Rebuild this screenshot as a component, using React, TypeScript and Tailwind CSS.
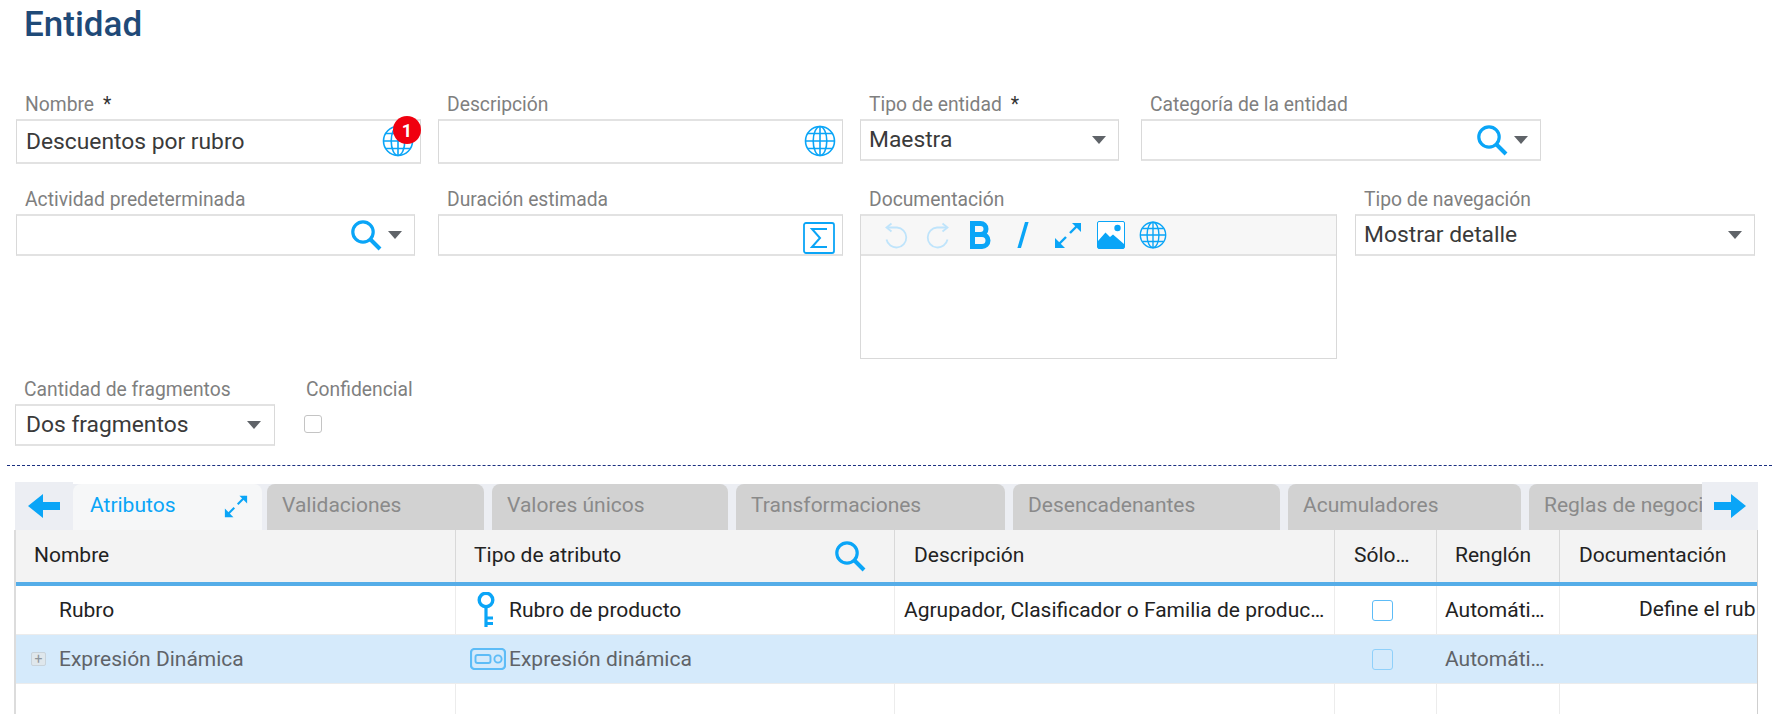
import React from "react";

const BLUE = "#0aa5f7";

function Globe({ size = 32, className = "" }: { size?: number; className?: string }) {
  return (
    <svg width={size} height={size} viewBox="0 0 32 32" fill="none" stroke={BLUE} strokeWidth="1.6" className={className}>
      <circle cx="16" cy="16" r="14.5" />
      <ellipse cx="16" cy="16" rx="6.8" ry="14.5" />
      <path d="M16 1.5v29M1.5 16h29M3.8 8.5h24.4M3.8 23.5h24.4" />
    </svg>
  );
}
function Search({ size = 32 }: { size?: number }) {
  return (
    <svg width={size} height={size} viewBox="0 0 32 32" fill="none" stroke={BLUE}>
      <circle cx="13" cy="13" r="10.2" strokeWidth="3.2" />
      <path d="M20.5 20.5L30 30" strokeWidth="4" />
    </svg>
  );
}
function Caret() {
  return (
    <svg width="14" height="8" viewBox="0 0 14 8" className="shrink-0">
      <path d="M0 0h14L7 8z" fill="#5f6368" />
    </svg>
  );
}
function Sigma() {
  return (
    <svg width="32" height="32" viewBox="0 0 32 32" fill="none" stroke={BLUE} className="mt-[6px]">
      <rect x="1" y="1" width="30" height="30" rx="2" strokeWidth="1.8" />
      <path d="M24 7H9l8 9-8 9h15" strokeWidth="2" />
    </svg>
  );
}
function Undo({ flip = false }: { flip?: boolean }) {
  return (
    <svg width="28" height="28" viewBox="0 0 28 28" fill="none" stroke="#bfe4fb" strokeWidth="1.8" className={flip ? "-scale-x-100" : ""}>
      <path d="M6 6.5h9a10 10 0 1 1-10.5 12" />
      <path d="M9.5 2.5L4.5 6.5l5 4" />
    </svg>
  );
}
function Expand({ size = 28 }: { size?: number }) {
  return (
    <svg width={size} height={size} viewBox="0 0 28 28" fill="none" stroke={BLUE}>
      <path d="M16 12L25 3" strokeWidth="2.4" />
      <path d="M18 2h9v9z" fill={BLUE} stroke="none" />
      <path d="M12 16L3 25" strokeWidth="2.4" />
      <path d="M1 17v10h10z" fill={BLUE} stroke="none" />
    </svg>
  );
}
function ImageIcon() {
  return (
    <svg width="28" height="28" viewBox="0 0 28 28">
      <rect x="0.5" y="0.5" width="27" height="27" rx="1.5" fill="#fff" stroke={BLUE} />
      <circle cx="20.5" cy="7" r="3.2" fill={BLUE} />
      <path d="M1 20l7.5-8.5L13 16l3-2.5L27 23v3.5a1 1 0 0 1-1 1H2a1 1 0 0 1-1-1z" fill={BLUE} />
    </svg>
  );
}
function Arrow({ right = false }: { right?: boolean }) {
  return (
    <svg width="32" height="24" viewBox="0 0 32 24" className={right ? "" : "-scale-x-100"}>
      <path d="M0 8h17V0l15 12-15 12v-8H0z" fill={BLUE} />
    </svg>
  );
}
function Key() {
  return (
    <svg width="20" height="36" viewBox="0 0 20 36" fill="none" stroke={BLUE}>
      <circle cx="10" cy="8" r="6.8" strokeWidth="3.4" />
      <path d="M10 15v20M10 26h7M10 31.5h7" strokeWidth="3.2" />
    </svg>
  );
}
function Expr() {
  return (
    <svg width="36" height="22" viewBox="0 0 36 22" fill="none" stroke="#5dbcf7" strokeWidth="1.9">
      <rect x="1" y="1" width="34" height="20" rx="3.5" strokeWidth="2.2" />
      <rect x="5.5" y="7" width="15" height="8" rx="2" />
      <circle cx="28" cy="11" r="3.6" />
    </svg>
  );
}
function BoldB() {
  return (
    <svg width="22" height="28" viewBox="0 0 22 28" fill="none" stroke={BLUE} strokeWidth="5">
      <path d="M3.5 2.5h8a5.5 5.5 0 0 1 0 11h-8zM3.5 13.5h9.5a6 6 0 0 1 0 12H3.5z" />
    </svg>
  );
}
function ItalicI() {
  return (
    <svg width="12" height="28" viewBox="0 0 12 28">
      <path d="M8 1h3.6L4 27H.4z" fill={BLUE} />
    </svg>
  );
}

function Label({ children, star = false, pl = "pl-[9px]" }: { children: React.ReactNode; star?: boolean; pl?: string }) {
  return (
    <div className={`h-[27px] ${pl} text-[19.3px] leading-[26px] text-[#7f7f7f] whitespace-nowrap`}>
      {children}
      {star && <span className="ml-[9px] text-[#333]">*</span>}
    </div>
  );
}
function Box({ children, h = "h-[45px]", className = "", pl = "pl-[9px]" }: { children?: React.ReactNode; h?: string; className?: string; pl?: string }) {
  return (
    <div className={`${h} ${className} ${pl} flex items-center justify-between border border-[#d9d9d9] border-t-[2px] border-b-[2px] border-t-[#e2e2e2] border-b-[#e2e2e2] bg-white text-[22.8px] text-[#3a3a3a] whitespace-nowrap`}>
      {children}
    </div>
  );
}

function Lookup() {
  return (
    <div className="ml-auto flex items-center gap-[6px] pr-[12px]">
      <Search />
      <Caret />
    </div>
  );
}

const COLS = "grid grid-cols-[440px_439px_440px_102px_123px_198px]";

function Tab({ label, w }: { label: string; w: string }) {
  return (
    <div className={`${w} mr-[8px] h-full shrink-0 rounded-t-[8px] bg-[#d2d2d2] pl-[15px] text-[21px] leading-[42px] text-[#8a8a8a] whitespace-nowrap`}>
      {label}
    </div>
  );
}

export default function App() {
  return (
    <div className="h-[714px] w-[1772px] overflow-hidden bg-white font-['Roboto',sans-serif]">
      <h1 className="pl-[24px] pt-[3px] text-[35px] leading-[44px] font-medium text-[#1f4a78]">Entidad</h1>

      <div className="mt-[45px] flex pl-[16px]">
        <div className="w-[405px]">
          <Label star>Nombre</Label>
          <Box className="relative pr-[6px]">
            <span className="mt-[2px]">Descuentos por rubro</span>
            <Globe className="-mt-[1px]" />
            <span className="absolute right-[-1px] top-[-5px] flex h-[28px] w-[28px] items-center justify-center rounded-full bg-[#f0000f] text-[18px] font-bold text-white">1</span>
          </Box>
        </div>
        <div className="ml-[17px] w-[405px]">
          <Label>Descripción</Label>
          <Box className="pr-[6px]">
            <span />
            <Globe className="-mt-[1px]" />
          </Box>
        </div>
        <div className="ml-[17px] w-[259px]">
          <Label star>Tipo de entidad</Label>
          <Box h="h-[42px]" pl="pl-[8px]" className="pr-[12px]">
            Maestra
            <Caret />
          </Box>
        </div>
        <div className="ml-[22px] w-[400px]">
          <Label>Categoría de la entidad</Label>
          <Box h="h-[42px]">
            <Lookup />
          </Box>
        </div>
      </div>

      <div className="mt-[23px] flex pl-[16px]">
        <div className="w-[399px]">
          <Label>Actividad predeterminada</Label>
          <Box h="h-[42px]">
            <Lookup />
          </Box>
        </div>
        <div className="ml-[23px] w-[405px]">
          <Label>Duración estimada</Label>
          <Box h="h-[42px]" className="pr-[7px]">
            <span />
            <Sigma />
          </Box>
        </div>
        <div className="ml-[17px] w-[477px]">
          <Label>Documentación</Label>
          <div className="h-[145px] border border-[#d9d9d9] border-t-[2px] border-t-[#e2e2e2]">
            <div className="flex h-[40px] items-center border-b-[2px] border-[#e2e2e2] bg-[#f7f7f7] pl-[21px]">
              <Undo />
              <span className="w-[14px]" />
              <Undo flip />
              <span className="w-[17px]" />
              <BoldB />
              <span className="w-[26px]" />
              <ItalicI />
              <span className="w-[25px]" />
              <Expand />
              <span className="w-[15px]" />
              <ImageIcon />
              <span className="w-[14px]" />
              <Globe size={28} />
            </div>
          </div>
        </div>
        <div className="ml-[18px] w-[400px]">
          <Label>Tipo de navegación</Label>
          <Box h="h-[42px]" pl="pl-[8px]" className="pr-[12px]">
            Mostrar detalle
            <Caret />
          </Box>
        </div>
      </div>

      <div className="mt-[18px] flex pl-[15px]">
        <div className="w-[260px]">
          <Label>Cantidad de fragmentos</Label>
          <Box h="h-[42px]" pl="pl-[10px]" className="pr-[13px]">
            Dos fragmentos
            <Caret />
          </Box>
        </div>
        <div className="ml-[29px]">
          <Label pl="pl-[2px]">Confidencial</Label>
          <div className="mt-[11px] h-[18px] w-[18px] rounded-[3px] border border-[#c4c4c4] bg-white" />
        </div>
      </div>

      <div className="ml-[7px] mt-[19px] border-t border-dashed border-[#1a2f80]" />

      <div className="ml-[15px] mt-[16px] w-[1743px]">
        <div className="flex h-[48px]">
          <div className="flex w-[58px] shrink-0 items-center justify-center bg-[#eceef3]">
            <Arrow />
          </div>
          <div className="mt-[2px] flex min-w-0 flex-1 overflow-hidden bg-[#eceef3]">
            <div className="relative z-10 mr-[5px] flex h-[48px] w-[189px] shrink-0 items-start justify-between rounded-t-[8px] bg-[#f6f7f8] pl-[17px] pr-[14px] text-[21px] leading-[42px] text-[#0aa5f7]">
              Atributos
              <span className="mt-[10px]">
                <Expand size={24} />
              </span>
            </div>
            <Tab label="Validaciones" w="w-[217px]" />
            <Tab label="Valores únicos" w="w-[236px]" />
            <Tab label="Transformaciones" w="w-[269px]" />
            <Tab label="Desencadenantes" w="w-[267px]" />
            <Tab label="Acumuladores" w="w-[233px]" />
            <Tab label="Reglas de negoci" w="w-[240px]" />
          </div>
          <div className="flex w-[56px] shrink-0 items-center justify-center bg-[#eceef3]">
            <Arrow right />
          </div>
        </div>

        <div className="-ml-[1px] border-l-[2px] border-r border-l-[#dcdcdc] border-r-[#cfcfcf]">
          <div className={`${COLS} h-[56px] border-b-[4px] border-[#55ade8] bg-[#f3f3f3] text-[21px] text-[#222]`}>
            <div className="flex items-center border-r border-[#d8d8d8] pl-[18px]">Nombre</div>
            <div className="flex items-center justify-between border-r border-[#d8d8d8] pl-[18px] pr-[28px]">
              Tipo de atributo
              <Search />
            </div>
            <div className="flex items-center border-r border-[#d8d8d8] pl-[19px]">Descripción</div>
            <div className="flex items-center border-r border-[#d8d8d8] pl-[19px]">Sólo…</div>
            <div className="flex items-center border-r border-[#d8d8d8] pl-[18px]">Renglón</div>
            <div className="flex items-center pl-[19px]">Documentación</div>
          </div>

          <div className={`${COLS} h-[49px] border-b border-[#ececec] text-[21px] text-[#222]`}>
            <div className="flex items-center border-r border-[#ececec] pl-[43px] pt-[2px]">Rubro</div>
            <div className="flex items-center gap-[13px] border-r border-[#ececec] pl-[20px]">
              <Key />
              <span className="mt-[2px]">Rubro de producto</span>
            </div>
            <div className="flex items-center border-r border-[#ececec] pl-[9px] pt-[2px] whitespace-nowrap">Agrupador, Clasificador o Familia de produc…</div>
            <div className="flex items-center border-r border-[#ececec] pl-[37px]">
              <div className="h-[21px] w-[21px] rounded-[3px] border border-[#5dbcf7] bg-white" />
            </div>
            <div className="flex items-center border-r border-[#ececec] pl-[8px] pt-[2px]">Automáti…</div>
            <div className="flex items-center overflow-hidden pl-[79px] whitespace-nowrap">Define el rub</div>
          </div>

          <div className={`${COLS} h-[49px] border-b border-[#ececec] bg-[#d5eafb] text-[21px] text-[#5f6368]`}>
            <div className="flex items-center gap-[13px] pl-[15px]">
              <span className="flex h-[14px] w-[15px] items-center justify-center rounded-[2px] border border-[#c9d3da] bg-[#dfe7ec] text-[14px] leading-none text-[#8d959b]">+</span>
              <span className="mt-[2px]">Expresión Dinámica</span>
            </div>
            <div className="flex items-center gap-[3px] pl-[14px]">
              <Expr />
              <span className="mt-[2px]">Expresión dinámica</span>
            </div>
            <div />
            <div className="flex items-center pl-[37px]">
              <div className="h-[21px] w-[21px] rounded-[3px] border border-[#8fd0fa]" />
            </div>
            <div className="flex items-center pl-[8px] pt-[2px]">Automáti…</div>
            <div />
          </div>

          <div className={`${COLS} h-[30px]`}>
            <div className="border-r border-[#ececec]" />
            <div className="border-r border-[#ececec]" />
            <div className="border-r border-[#ececec]" />
            <div className="border-r border-[#ececec]" />
            <div className="border-r border-[#ececec]" />
            <div />
          </div>
        </div>
      </div>
    </div>
  );
}
